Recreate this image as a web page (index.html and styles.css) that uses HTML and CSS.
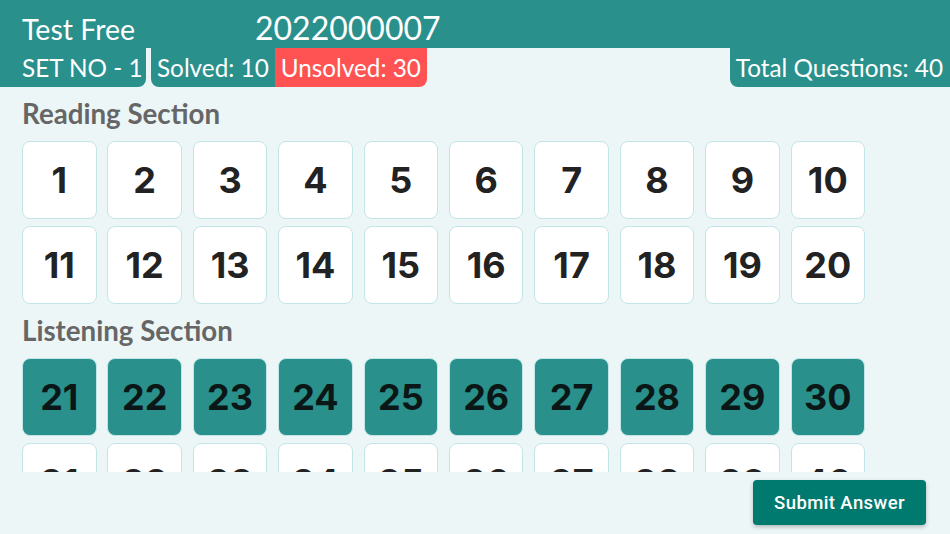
FILE: index.html
```html
<!DOCTYPE html>
<html>
<head>
<meta charset="utf-8">
<link rel="stylesheet" href="styles.css">
</head>
<body>
<div class="app">
  <header class="topbar">
    <div class="title">Test Free</div>
    <div class="code">2022000007</div>
  </header>
  <div class="statusrow">
    <div class="chip chip-set">SET NO - 1</div>
    <div class="chip chip-solved">Solved: 10</div>
    <div class="chip chip-unsolved">Unsolved: 30</div>
    <div class="spacer"></div>
    <div class="chip chip-total">Total Questions: 40</div>
  </div>
  <main class="scroll">
    <h2 class="section-title">Reading Section</h2>
    <div class="grid">
      <div class="tile">1</div><div class="tile">2</div><div class="tile">3</div><div class="tile">4</div><div class="tile">5</div>
      <div class="tile">6</div><div class="tile">7</div><div class="tile">8</div><div class="tile">9</div><div class="tile">10</div>
      <div class="tile">11</div><div class="tile">12</div><div class="tile">13</div><div class="tile">14</div><div class="tile">15</div>
      <div class="tile">16</div><div class="tile">17</div><div class="tile">18</div><div class="tile">19</div><div class="tile">20</div>
    </div>
    <h2 class="section-title">Listening Section</h2>
    <div class="grid">
      <div class="tile done">21</div><div class="tile done">22</div><div class="tile done">23</div><div class="tile done">24</div><div class="tile done">25</div>
      <div class="tile done">26</div><div class="tile done">27</div><div class="tile done">28</div><div class="tile done">29</div><div class="tile done">30</div>
      <div class="tile">31</div><div class="tile">32</div><div class="tile">33</div><div class="tile">34</div><div class="tile">35</div>
      <div class="tile">36</div><div class="tile">37</div><div class="tile">38</div><div class="tile">39</div><div class="tile">40</div>
    </div>
  </main>
  <footer class="footer">
    <button class="submit">Submit Answer</button>
  </footer>
</div>
</body>
</html>
```
FILE: styles.css
```css
html, body {
  margin: 0;
  padding: 0;
}
body {
  background: #edf6f7;
  font-family: "Lato", "Noto Sans", sans-serif;
  width: 950px;
  height: 534px;
  overflow: hidden;
}
.app {
  display: flex;
  flex-direction: column;
  height: 534px;
}
.topbar {
  background: #2a908b;
  height: 48px;
  display: flex;
  align-items: baseline;
  padding: 3px 0 0 22px;
  color: #fff;
  box-sizing: border-box;
}
.title {
  font-size: 28.5px;
  line-height: 50px;
  width: 233px;
}
.code {
  font-size: 32px;
  line-height: 50px;
}
.statusrow {
  display: flex;
  height: 39px;
}
.chip {
  color: #fff;
  font-size: 24.3px;
  line-height: 39px;
  padding: 0 6px;
  white-space: nowrap;
  box-sizing: border-box;
}
.chip-set {
  background: #2a908b;
  width: 146px;
  padding-left: 22px;
  padding-right: 0;
  border-bottom-right-radius: 8px;
  margin-right: 5px;
}
.chip-solved {
  background: #2a908b;
  border-bottom-left-radius: 8px;
}
.chip-unsolved {
  background: #ff5252;
  border-bottom-right-radius: 8px;
}
.spacer {
  flex: 1;
}
.chip-total {
  background: #2a908b;
  border-bottom-left-radius: 8px;
  padding-right: 7px;
}
.scroll {
  height: 385px;
  overflow: hidden;
  padding-left: 22px;
}
.section-title {
  margin: 7px 0;
  font-size: 27.7px;
  line-height: 40px;
  font-weight: 700;
  color: #666666;
}
.grid {
  display: grid;
  grid-template-columns: repeat(10, 74.5px);
  grid-auto-rows: 78px;
  column-gap: 10.9px;
  row-gap: 7px;
}
.tile {
  background: #ffffff;
  border: 1.5px solid #c2e6e7;
  border-radius: 8px;
  box-sizing: border-box;
  display: flex;
  align-items: center;
  justify-content: center;
  font-family: "Inter", "Liberation Sans", sans-serif;
  font-weight: 700;
  font-size: 36px;
  color: #222222;
}
.tile.done {
  background: #2a908b;
  color: #0a1716;
}
.footer {
  flex: 1;
  display: flex;
  justify-content: flex-end;
  align-items: flex-start;
  padding: 8px 24px 0 0;
}
.submit {
  background: #00796f;
  color: #fff;
  border: none;
  border-radius: 4px;
  width: 173px;
  height: 45px;
  font-family: "Roboto", "Liberation Sans", sans-serif;
  font-weight: 500;
  font-size: 18.5px;
  letter-spacing: 0.4px;
  box-shadow: 0 2px 4px rgba(0, 0, 0, 0.25);
  padding: 0;
}
```
